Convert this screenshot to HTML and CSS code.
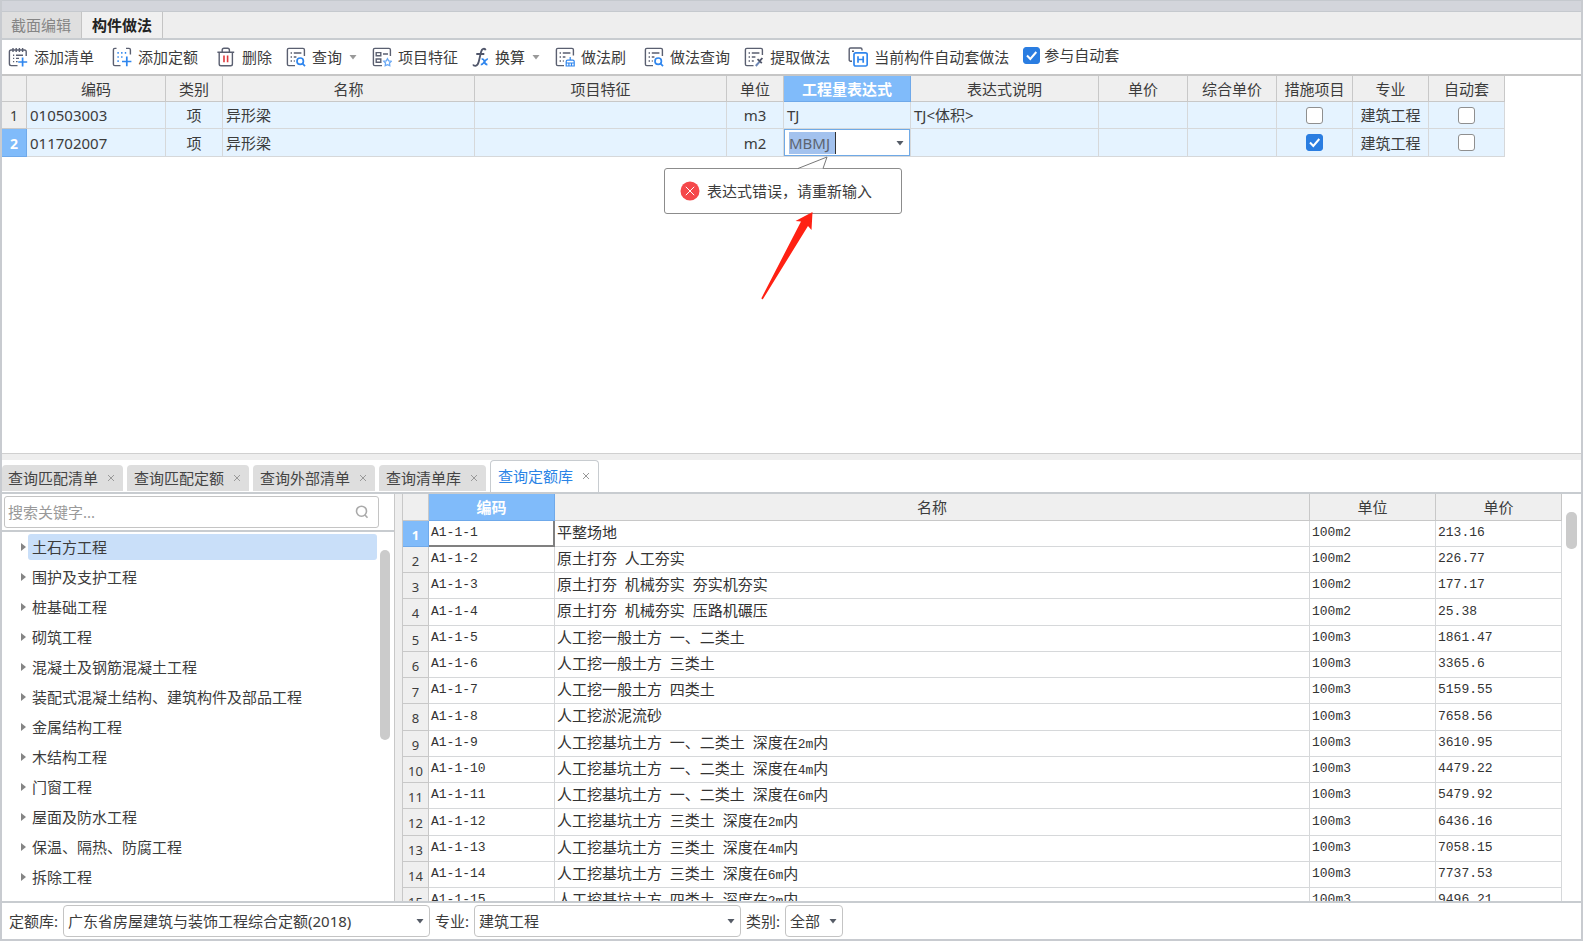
FILE: index.html
```html
<!DOCTYPE html>
<html lang="zh-CN">
<head>
<meta charset="utf-8">
<meta name="viewport" content="width=device-width, initial-scale=1">
<title>构件做法</title>
<link rel="stylesheet" href="styles.css">
</head>
<body>
<div class="app">
  <div class="titlebar"></div>

  <nav class="main-tabs">
    <button class="main-tab" type="button">截面编辑</button>
    <button class="main-tab main-tab-active" type="button">构件做法</button>
  </nav>

  <div class="toolbar">
    <button class="tool tool-wide" type="button">
      <svg class="icon" viewBox="0 0 20 20"><path class="ink" d="M18.2 9V4.8Q18.2 3 16.4 3H3.2Q1.4 3 1.4 4.8V16.8Q1.4 18.6 3.2 18.6H9.5M5 1v4M8.2 1v4M11.4 1v4M14.6 1v4M5 8.2h1.2M8 8.2h7M5 11.4h1.2M8 11.4h3M5 14.6h1.2M8 14.6h1.6"/><path class="blue" d="M14.6 10.5v9M10.2 15h9"/></svg>
      添加清单</button>
    <button class="tool tool-wide" type="button">
      <svg class="icon" viewBox="0 0 20 20"><path class="ink" d="M18.4 7.5V2.8Q18.4 1.4 17 1.4H14M4.5 1.4H2.8Q1.4 1.4 1.4 2.8V17.2Q1.4 18.6 2.8 18.6H8.5"/><path class="blue" d="M5.4 5.9h1.4M9.1 5.9h1.4M12.8 5.9h1.4M5.4 10h1.4M9.1 10h1.4M5.4 14.2h1.4M14.8 9.6v9.6M10 14.5h9.4"/></svg>
      添加定额</button>
    <button class="tool" type="button">
      <svg class="icon" viewBox="0 0 20 20"><path class="ink" d="M1.4 5.2H18.2M3.2 5.2V17Q3.2 18.8 5 18.8H14.6Q16.4 18.8 16.4 17V5.2M6.2 5V3Q6.2 1.2 8 1.2H11.6Q13.4 1.2 13.4 3V5"/><path class="red" d="M8 8.5v6.8M11.6 8.5v6.8"/></svg>
      删除</button>
    <button class="tool" type="button">
      <svg class="icon" viewBox="0 0 20 20"><path class="ink" d="M18.4 9V2.8Q18.4 1.4 17 1.4H2.8Q1.4 1.4 1.4 2.8V17.2Q1.4 18.6 2.8 18.6H9M4.6 6h1.4M7.8 6h7.6M4.6 10h1.4M7.8 10h2.6M4.6 14h1.4M7.8 14h1"/><circle class="blue" cx="14.2" cy="14.2" r="3.2"/><path class="blue" d="M16.6 16.7l2.4 2.5"/></svg>
      查询
      <svg class="caret" viewBox="0 0 10 6"><path d="M1.5 1h7L5 5.5z"/></svg></button>
    <button class="tool" type="button">
      <svg class="icon" viewBox="0 0 20 20"><path class="ink" d="M18.4 9V2.8Q18.4 1.4 17 1.4H2.8Q1.4 1.4 1.4 2.8V17.2Q1.4 18.6 2.8 18.6H10M4.2 5.6h4.6v3.2H4.2zM11 7h5M4.2 12h4.6v3.2H4.2z"/><path class="lightblue" d="M15.5 11.7l1.2 2.2 2.5.4-1.7 1.8.3 2.6-2.3-1-2.3 1 .3-2.6-1.7-1.8 2.5-.4z"/></svg>
      项目特征</button>
    <button class="tool" type="button">
      <svg class="icon icon-fx" viewBox="0 0 17 20"><path class="ink-thick" d="M13.600 3.200Q13.200 1.400 11.300 1.800Q9.600 2.200 8.900 5.500L6.800 14.500Q5.900 18.500 3.400 18.800Q1.600 18.900 1.100 17.500M4.300 7h8"/><path class="blue" d="M9.600 12.200Q11.600 11.500 12.300 14.500T15.400 17.600M15.900 12.200Q14.600 11.800 12.500 14.700T8.800 17.600"/></svg>
      换算
      <svg class="caret" viewBox="0 0 10 6"><path d="M1.500 1h7L5 5.500z"/></svg></button>
    <button class="tool tool-wide" type="button">
      <svg class="icon" viewBox="0 0 20 20"><path class="ink" d="M18.400 8.500V2.800Q18.400 1.400 17 1.400H2.800Q1.400 1.400 1.400 2.800V17.200Q1.400 18.600 2.800 18.600H9M4.600 6h1.400M7.800 6h7.600M4.600 10h1.400M7.800 10h2.600M4.600 14h1.400M7.800 14h1"/><path class="brush" d="M15.200 10v3.200M11.200 16V14.600Q11.200 13.200 12.600 13.200H17.800Q19.200 13.200 19.200 14.600V16M11.200 16h8v3h-8zM13.900 16v3M16.500 16v3"/></svg>
      做法刷</button>
    <button class="tool" type="button">
      <svg class="icon" viewBox="0 0 20 20"><path class="ink" d="M18.400 9V2.800Q18.400 1.400 17 1.400H2.800Q1.400 1.400 1.400 2.800V17.200Q1.400 18.600 2.800 18.600H9M4.600 6h1.400M7.800 6h7.600M4.600 10h1.400M7.800 10h2.600M4.600 14h1.400M7.800 14h1"/><circle class="blue" cx="14.200" cy="14.200" r="3.200"/><path class="blue" d="M16.600 16.700l2.400 2.500"/></svg>
      做法查询</button>
    <button class="tool tool-wide" type="button">
      <svg class="icon" viewBox="0 0 20 20"><path class="ink" d="M18.400 8V2.800Q18.400 1.400 17 1.400H2.800Q1.400 1.400 1.400 2.800V17.200Q1.400 18.600 2.800 18.600H9.500M4.600 6h1.400M7.800 6h7.600M4.600 10h1.400M7.800 10h3.600M4.600 14h1.400M7.800 14h2"/><path class="steel" d="M11.800 19l4-4.600"/><path class="ink-thick" d="M13.500 12.200l4.300 4M15.600 14.200l2.800-3.200"/></svg>
      提取做法</button>
    <button class="tool" type="button">
      <svg class="icon" viewBox="0 0 20 20"><path class="ink" d="M4 14.200H2.600Q1.200 14.200 1.200 12.800V2.400Q1.200 1 2.600 1H12.600Q14 1 14 2.400V3.500M4 4.300h2"/><rect class="blue" x="6" y="5.800" width="13.200" height="13.200" rx="1.600"/><path class="blue" d="M10 9.200v6.600M15.200 9.200v6.600M10 12.500h5.200"/></svg>
      当前构件自动套做法</button>
    <label class="tool-check"><input class="check" type="checkbox" checked>参与自动套</label>
  </div>

  <main class="upper">
    <table class="work-table">
      <colgroup>
        <col class="w-num"><col class="w-code"><col class="w-unit"><col class="w-long"><col class="w-long"><col class="w-unit"><col class="w-expr"><col class="w-desc"><col class="w-price"><col class="w-price"><col class="w-flag"><col class="w-flag"><col class="w-flag">
      </colgroup>
      <thead>
        <tr><th></th><th>编码</th><th>类别</th><th>名称</th><th>项目特征</th><th>单位</th><th class="current">工程量表达式</th><th>表达式说明</th><th>单价</th><th>综合单价</th><th>措施项目</th><th>专业</th><th>自动套</th></tr>
      </thead>
      <tbody>
        <tr>
          <th scope="row">1</th><td>010503003</td><td class="center">项</td><td>异形梁</td><td></td><td class="center">m3</td><td>TJ</td><td>TJ&lt;体积&gt;</td><td></td><td></td>
          <td class="center"><input class="check" type="checkbox" aria-label="措施项目"></td><td class="center">建筑工程</td><td class="center"><input class="check" type="checkbox" aria-label="自动套"></td>
        </tr>
        <tr>
          <th scope="row" class="current">2</th><td>011702007</td><td class="center">项</td><td>异形梁</td><td></td><td class="center">m2</td>
          <td class="editing">
            <div class="editor">
              <input class="editor-input" type="text" value="MBMJ" aria-label="工程量表达式">
              <svg class="caret caret-dark" viewBox="0 0 10 6"><path d="M1.500 1h7L5 5.500z"/></svg>
            </div>
            <div class="callout" role="alert">
              <svg class="callout-tip" viewBox="0 0 32 14"><path d="M1 12.500L30 1L26 12.500"/></svg>
              <svg class="error-icon" viewBox="0 0 20 20"><circle cx="10" cy="10" r="9.500"/><path d="M5.800 5.800l8.400 8.400M14.200 5.800l-8.400 8.400"/></svg>
              <span>表达式错误，请重新输入</span>
            </div>
            <svg class="pointer" viewBox="0 0 54 90"><path d="M51.500 1L50.500 19L47 15L2 88Q.5 89 .5 87L40 10.500L34.500 10Z"/></svg>
          </td>
          <td></td><td></td><td></td>
          <td class="center"><input class="check" type="checkbox" checked aria-label="措施项目"></td><td class="center">建筑工程</td><td class="center"><input class="check" type="checkbox" aria-label="自动套"></td>
        </tr>
      </tbody>
    </table>
  </main>

  <nav class="query-tabs">
    <div class="query-tab"><span>查询匹配清单</span><button class="close" type="button" aria-label="关闭"><svg viewBox="0 0 8 8"><path d="M1 1l6 6M7 1l-6 6"/></svg></button></div>
    <div class="query-tab"><span>查询匹配定额</span><button class="close" type="button" aria-label="关闭"><svg viewBox="0 0 8 8"><path d="M1 1l6 6M7 1l-6 6"/></svg></button></div>
    <div class="query-tab"><span>查询外部清单</span><button class="close" type="button" aria-label="关闭"><svg viewBox="0 0 8 8"><path d="M1 1l6 6M7 1l-6 6"/></svg></button></div>
    <div class="query-tab"><span>查询清单库</span><button class="close" type="button" aria-label="关闭"><svg viewBox="0 0 8 8"><path d="M1 1l6 6M7 1l-6 6"/></svg></button></div>
    <div class="query-tab query-tab-active"><span>查询定额库</span><button class="close" type="button" aria-label="关闭"><svg viewBox="0 0 8 8"><path d="M1 1l6 6M7 1l-6 6"/></svg></button></div>
  </nav>

  <section class="lower">
    <aside class="catalog">
      <div class="search-row">
        <div class="search">
          <input class="search-input" type="text" placeholder="搜索关键字..." aria-label="搜索关键字">
          <svg class="search-icon" viewBox="0 0 14 14"><circle cx="6.500" cy="6.200" r="5"/><path d="M10 10l2.500 2.800"/></svg>
        </div>
      </div>
      <div class="tree-row">
        <ul class="tree">
          <li><svg class="twist" viewBox="0 0 5 8"><path d="M0 0l5 4-5 4z"/></svg><button class="node node-selected" type="button">土石方工程</button></li>
          <li><svg class="twist" viewBox="0 0 5 8"><path d="M0 0l5 4-5 4z"/></svg><button class="node" type="button">围护及支护工程</button></li>
          <li><svg class="twist" viewBox="0 0 5 8"><path d="M0 0l5 4-5 4z"/></svg><button class="node" type="button">桩基础工程</button></li>
          <li><svg class="twist" viewBox="0 0 5 8"><path d="M0 0l5 4-5 4z"/></svg><button class="node" type="button">砌筑工程</button></li>
          <li><svg class="twist" viewBox="0 0 5 8"><path d="M0 0l5 4-5 4z"/></svg><button class="node" type="button">混凝土及钢筋混凝土工程</button></li>
          <li><svg class="twist" viewBox="0 0 5 8"><path d="M0 0l5 4-5 4z"/></svg><button class="node" type="button">装配式混凝土结构、建筑构件及部品工程</button></li>
          <li><svg class="twist" viewBox="0 0 5 8"><path d="M0 0l5 4-5 4z"/></svg><button class="node" type="button">金属结构工程</button></li>
          <li><svg class="twist" viewBox="0 0 5 8"><path d="M0 0l5 4-5 4z"/></svg><button class="node" type="button">木结构工程</button></li>
          <li><svg class="twist" viewBox="0 0 5 8"><path d="M0 0l5 4-5 4z"/></svg><button class="node" type="button">门窗工程</button></li>
          <li><svg class="twist" viewBox="0 0 5 8"><path d="M0 0l5 4-5 4z"/></svg><button class="node" type="button">屋面及防水工程</button></li>
          <li><svg class="twist" viewBox="0 0 5 8"><path d="M0 0l5 4-5 4z"/></svg><button class="node" type="button">保温、隔热、防腐工程</button></li>
          <li><svg class="twist" viewBox="0 0 5 8"><path d="M0 0l5 4-5 4z"/></svg><button class="node" type="button">拆除工程</button></li>
        </ul>
        <div class="tree-scroll"><div class="thumb thumb-tree"></div></div>
      </div>
    </aside>

    <div class="quota">
      <div class="quota-view">
        <table class="quota-table">
          <colgroup><col class="w-index"><col class="w-field"><col><col class="w-field"><col class="w-field"></colgroup>
          <thead><tr><th></th><th class="current">编码</th><th>名称</th><th>单位</th><th>单价</th></tr></thead>
          <tbody>
            <tr><th scope="row" class="current">1</th><td class="focused">A1-1-1</td><td><b>平整场地</b></td><td>100m2</td><td>213.16</td></tr>
            <tr><th scope="row">2</th><td>A1-1-2</td><td><b>原土打夯</b> <b>人工夯实</b></td><td>100m2</td><td>226.77</td></tr>
            <tr><th scope="row">3</th><td>A1-1-3</td><td><b>原土打夯</b> <b>机械夯实</b> <b>夯实机夯实</b></td><td>100m2</td><td>177.17</td></tr>
            <tr><th scope="row">4</th><td>A1-1-4</td><td><b>原土打夯</b> <b>机械夯实</b> <b>压路机碾压</b></td><td>100m2</td><td>25.38</td></tr>
            <tr><th scope="row">5</th><td>A1-1-5</td><td><b>人工挖一般土方</b> <b>一、二类土</b></td><td>100m3</td><td>1861.47</td></tr>
            <tr><th scope="row">6</th><td>A1-1-6</td><td><b>人工挖一般土方</b> <b>三类土</b></td><td>100m3</td><td>3365.6</td></tr>
            <tr><th scope="row">7</th><td>A1-1-7</td><td><b>人工挖一般土方</b> <b>四类土</b></td><td>100m3</td><td>5159.55</td></tr>
            <tr><th scope="row">8</th><td>A1-1-8</td><td><b>人工挖淤泥流砂</b></td><td>100m3</td><td>7658.56</td></tr>
            <tr><th scope="row">9</th><td>A1-1-9</td><td><b>人工挖基坑土方</b> <b>一、二类土</b> <b>深度在</b>2m<b>内</b></td><td>100m3</td><td>3610.95</td></tr>
            <tr><th scope="row">10</th><td>A1-1-10</td><td><b>人工挖基坑土方</b> <b>一、二类土</b> <b>深度在</b>4m<b>内</b></td><td>100m3</td><td>4479.22</td></tr>
            <tr><th scope="row">11</th><td>A1-1-11</td><td><b>人工挖基坑土方</b> <b>一、二类土</b> <b>深度在</b>6m<b>内</b></td><td>100m3</td><td>5479.92</td></tr>
            <tr><th scope="row">12</th><td>A1-1-12</td><td><b>人工挖基坑土方</b> <b>三类土</b> <b>深度在</b>2m<b>内</b></td><td>100m3</td><td>6436.16</td></tr>
            <tr><th scope="row">13</th><td>A1-1-13</td><td><b>人工挖基坑土方</b> <b>三类土</b> <b>深度在</b>4m<b>内</b></td><td>100m3</td><td>7058.15</td></tr>
            <tr><th scope="row">14</th><td>A1-1-14</td><td><b>人工挖基坑土方</b> <b>三类土</b> <b>深度在</b>6m<b>内</b></td><td>100m3</td><td>7737.53</td></tr>
            <tr><th scope="row">15</th><td>A1-1-15</td><td><b>人工挖基坑土方</b> <b>四类土</b> <b>深度在</b>2m<b>内</b></td><td>100m3</td><td>9496.21</td></tr>
          </tbody>
        </table>
      </div>
      <div class="quota-scroll"><div class="thumb thumb-quota"></div></div>
    </div>
  </section>

  <footer class="filters">
    <label for="library">定额库:</label>
    <div class="select select-library"><select id="library"><option>广东省房屋建筑与装饰工程综合定额(2018)</option></select><svg class="caret caret-dark" viewBox="0 0 10 6"><path d="M1.500 1h7L5 5.500z"/></svg></div>
    <label for="major">专业:</label>
    <div class="select select-major"><select id="major"><option>建筑工程</option></select><svg class="caret caret-dark" viewBox="0 0 10 6"><path d="M1.500 1h7L5 5.500z"/></svg></div>
    <label for="kind">类别:</label>
    <div class="select select-kind"><select id="kind"><option>全部</option></select><svg class="caret caret-dark" viewBox="0 0 10 6"><path d="M1.500 1h7L5 5.500z"/></svg></div>
  </footer>
</div>
</body>
</html>
```
FILE: styles.css
```css
* { box-sizing: border-box; }

body {
  margin: 0;
  background: #fff;
  color: #3c3c3c;
  font: 15px/20px "Noto Sans", "Noto Sans CJK SC", sans-serif;
}

button, input, select {
  margin: 0;
  padding: 0;
  border: 0;
  background: none;
  color: inherit;
  font: inherit;
}

.app {
  display: flex;
  flex-direction: column;
  height: 100vh;
  border: solid #c8cbd0;
  border-width: 0 2px 2px;
  overflow: hidden;
}

.titlebar {
  flex: none;
  height: 12px;
  border: solid #c5c9ce;
  border-width: 1px 0;
  background: #d3d5db;
}

/* Main tabs */
.main-tabs {
  display: flex;
  flex: none;
  height: 28px;
  border-bottom: 2px solid #c8ccd0;
  background: #eee;
}

.main-tab {
  padding: 0 10px 0 9px;
  border-right: 1px solid #c4c4c4;
  background: #dfdfdf;
  color: #858585;
}

.main-tab-active {
  padding: 0 10px;
  background: #f0f0f0;
  color: #222;
  font-weight: 700;
}

/* Toolbar */
.toolbar {
  display: flex;
  flex: none;
  align-items: center;
  gap: 14px;
  height: 36px;
  padding-left: 6px;
  border-bottom: 2px solid #c6c6c6;
}

.tool {
  display: flex;
  flex: none;
  align-items: center;
  gap: 6px;
  white-space: nowrap;
}

.tool-wide { margin-right: 4px; }

.icon { width: 20px; height: 20px; fill: none; }
.icon-fx { width: 17px; }
.ink { stroke: #5a5f70; stroke-width: 1.4; }
.ink-thick { stroke: #50566a; stroke-width: 1.8; }
.steel { stroke: #6d87b5; stroke-width: 2; }
.blue { stroke: #2f86ee; stroke-width: 1.7; }
.brush { stroke: #2f86ee; stroke-width: 1.2; }
.lightblue { stroke: #6aa9f5; stroke-width: 1.3; }
.red { stroke: #e03a3e; stroke-width: 1.6; }

.caret { width: 10px; height: 6px; fill: #999; }
.caret-dark { fill: #555b66; }

.tool-check {
  display: flex;
  align-items: center;
  gap: 4px;
  padding-bottom: 4px;
  white-space: nowrap;
}

.check {
  display: block;
  flex: none;
  appearance: none;
  width: 17px;
  height: 17px;
  border: 1px solid #8f8f8f;
  border-radius: 3px;
  background: #fff;
}

.check:checked {
  border-color: #2a7de1;
  background: #2a7de1 url("data:image/svg+xml,%3Csvg xmlns='http://www.w3.org/2000/svg' viewBox='0 0 15 15'%3E%3Cpath d='M3 7.500l3.300 3.500 6-7' fill='none' stroke='white' stroke-width='2'/%3E%3C/svg%3E") center / 15px 15px;
}

/* Tables */
table {
  border-collapse: separate;
  border-spacing: 0;
  table-layout: fixed;
}

th {
  padding: 0;
  border: solid #c8c8c8;
  border-width: 0 1px 1px 0;
  background: #efefef;
  font-weight: 400;
  text-align: center;
}

th.current {
  border-color: #6fa9ea;
  background: #80bbfa;
  color: #fff;
  font-weight: 700;
}

td {
  border: solid #d6d8da;
  border-width: 0 1px 1px 0;
  text-align: left;
  white-space: nowrap;
}

.upper {
  flex: 377 1 0;
  min-height: 0;
  border-bottom: 1px solid #d0d0d0;
}

.work-table { width: 1503px; }
.work-table thead tr { height: 26px; }
.work-table tbody tr { height: 27px; }
.work-table td { padding: 0 3px; background: #e5f3ff; }
.work-table .center { padding: 0; text-align: center; }
.work-table .check { margin: 0 auto; }
.work-table tbody th { padding-top: 2px; font-size: 14px; }

.w-num { width: 25px; }
.w-code { width: 139px; }
.w-unit { width: 57px; }
.w-long { width: 252px; }
.w-expr { width: 127px; }
.w-desc { width: 188px; }
.w-price { width: 89px; }
.w-flag { width: 76px; }

.work-table .editing { position: relative; padding: 0; }

.editor {
  display: flex;
  align-items: center;
  justify-content: space-between;
  height: 27px;
  padding: 0 4px;
  border: 1px solid #6fa9e6;
  background: #fff;
}

.editor-input {
  width: 47px;
  height: 22px;
  border-right: 1px solid #333;
  background: #a3c2ee;
  color: #5c6470;
}

.callout {
  position: absolute;
  top: 39px;
  left: -120px;
  z-index: 1;
  display: flex;
  align-items: center;
  gap: 7px;
  width: 238px;
  height: 46px;
  padding-left: 15px;
  border: 1px solid #8c8c8c;
  border-radius: 3px;
  background: #fff;
}

.callout-tip {
  position: absolute;
  top: -13px;
  left: 132px;
  width: 32px;
  height: 14px;
  fill: #fff;
  stroke: #777;
}

.error-icon { width: 20px; height: 20px; fill: #f5484b; stroke: #fff; }
.error-icon circle { stroke: none; }

.pointer {
  position: absolute;
  top: 82px;
  left: -23px;
  z-index: 2;
  width: 54px;
  height: 90px;
  fill: #ff2113;
}

/* Query tabs */
.query-tabs {
  display: flex;
  flex: none;
  align-items: flex-end;
  gap: 4px;
  height: 40px;
  border-top: 6px solid #eee;
  border-bottom: 2px solid #c8ccd0;
}

.query-tab {
  display: flex;
  align-items: center;
  gap: 9px;
  height: 26px;
  margin-bottom: 1px;
  padding: 0 8px 0 7px;
  border-radius: 4px 4px 0 0;
  background: #dedede;
  color: #444;
}

.query-tab:first-child { padding-left: 6px; }

.query-tab-active {
  height: 32px;
  margin-bottom: 0;
  border: solid #c8ccd0;
  border-width: 1px 1px 0;
  background: #fff;
  color: #2a84e6;
}

.close { display: flex; }
.close svg { width: 8px; height: 8px; fill: none; stroke: #999; }

/* Lower panes */
.lower {
  display: flex;
  flex: 408 1 0;
  min-height: 0;
  background: #eee;
}

.catalog {
  display: flex;
  flex: none;
  flex-direction: column;
  width: 393px;
  border-right: 1px solid #c8c8c8;
  background: #fff;
}

.search-row {
  padding: 2px 15px 2px 2px;
  border-bottom: 2px solid #c8ccd0;
}

.search {
  display: flex;
  align-items: center;
  height: 32px;
  padding: 0 9px 0 3px;
  border: 1px solid #c4c4c4;
  border-radius: 3px;
}

.search-input { flex: 1; min-width: 0; outline: 0; }
.search-input::placeholder { color: #999; opacity: 1; }
.search-icon { width: 14px; height: 14px; fill: none; stroke: #aaa; stroke-width: 1.6; }

.tree-row {
  display: flex;
  flex: 1;
  min-height: 0;
}

.tree {
  flex: 1;
  margin: 0;
  padding: 0 0 0 19px;
  overflow: hidden;
  list-style: none;
}

.tree li {
  display: flex;
  align-items: center;
  gap: 2px;
  height: 30px;
}

.twist { width: 5px; height: 8px; fill: #858585; }

.node {
  flex: 1;
  height: 26px;
  padding-left: 4px;
  border-radius: 3px;
  text-align: left;
  white-space: nowrap;
}

.node-selected { background: #c9dff9; }

.tree-scroll { width: 17px; padding: 18px 4px 0 3px; }
.thumb { border-radius: 5px; background: #cbcbcb; }
.thumb-tree { height: 190px; }

.quota {
  display: flex;
  flex: 1;
  min-width: 0;
  margin-left: 7px;
  border-left: 1px solid #c8c8c8;
  background: #fff;
}

.quota-view { flex: 1; min-width: 0; overflow: hidden; }
.quota-table { width: 100%; }
.quota-table thead tr { height: 27px; }
.quota-table tbody tr { height: 26px; }
.quota-table tbody tr:nth-child(4n) { height: 27px; }

.quota-table td {
  padding: 0 2px;
  color: #333;
  font: 13px/20px "Liberation Mono", monospace;
}

.quota-table b { font: 15px/20px "Noto Sans CJK SC", sans-serif; }
.quota-table tbody th { padding-top: 3px; font-size: 13px; }

.quota-table .focused {
  border-color: #808080;
  border-width: 0 2px 2px 0;
}

.w-index { width: 26px; }
.w-field { width: 126px; }

.quota-scroll { width: 19px; padding: 18px 4px 0; }
.thumb-quota { height: 37px; }

/* Filters */
.filters {
  display: flex;
  flex: none;
  align-items: center;
  gap: 5px;
  height: 38px;
  padding-left: 7px;
  border-top: 2px solid #c8ccd0;
  white-space: nowrap;
}

.select { position: relative; height: 32px; }

.select select {
  width: 100%;
  height: 100%;
  padding: 0 20px 0 4px;
  appearance: none;
  border: 1px solid #c4c4c4;
  border-radius: 4px;
  background: #fff;
}

.select .caret {
  position: absolute;
  top: 13px;
  right: 5px;
  pointer-events: none;
}

.select-library { width: 367px; }
.select-major { width: 267px; }
.select-kind { width: 58px; }
```
